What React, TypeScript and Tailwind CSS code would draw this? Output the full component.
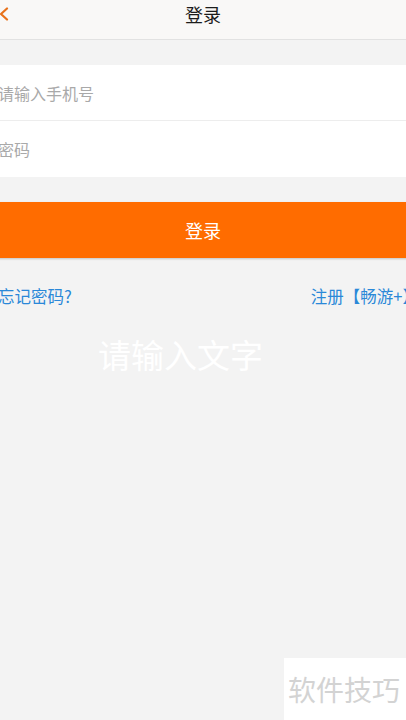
import React, { JSX } from "react";

const cjk = "[font-family:'Noto_Sans_CJK_SC','Noto_Sans',sans-serif]";

export default function App(): JSX.Element {
  return (
    <div className={`relative w-[406px] h-[720px] overflow-hidden bg-[#f3f3f3] ${cjk}`}>
      <div className="w-[434px] -ml-[14px] flex flex-col">
        <header className="relative h-[40px] flex justify-center pt-[3px] bg-[#f9f8f7] border-b border-[#e2e2e2]">
          <svg className="absolute left-[12px] top-[7px]" width="12" height="14" viewBox="0 0 12 14" fill="none">
            <path d="M9 1.5 L3 7 L9 12.5" stroke="#e8711a" strokeWidth="2.2" strokeLinecap="round" strokeLinejoin="round" />
          </svg>
          <h1 className="text-[18px] leading-[22px] text-[#1c1c1c]">登录</h1>
        </header>

        <div className="mt-[25px] flex flex-col bg-white">
          <div className="h-[56px] flex items-center px-[12px] border-b border-[#ededed]">
            <span className="text-[16px] text-[#a9a9a9]">请输入手机号</span>
          </div>
          <div className="h-[56px] flex items-center px-[12px]">
            <span className="text-[16px] text-[#a9a9a9]">密码</span>
          </div>
        </div>

        <button className="mt-[25px] h-[56px] bg-[#ff6c00] text-white text-[18px] shadow-[0_1px_2px_rgba(0,0,0,0.2)]">
          登录
        </button>

        <div className="mt-[26px] flex justify-between pl-[12px] pr-[1px] text-[16.5px] text-[#2a88d8]">
          <span>忘记密码?</span>
          <span>注册【畅游+】</span>
        </div>
      </div>

      <div className="absolute left-[98px] top-[334px] text-[33px] leading-[40px] text-white">请输入文字</div>

      <div className="absolute left-[284px] top-[658px] w-[122px] h-[62px] bg-white flex items-center pl-[4px]">
        <span className="text-[28px] text-[#d3d3d3] whitespace-nowrap">软件技巧</span>
      </div>
    </div>
  );
}
